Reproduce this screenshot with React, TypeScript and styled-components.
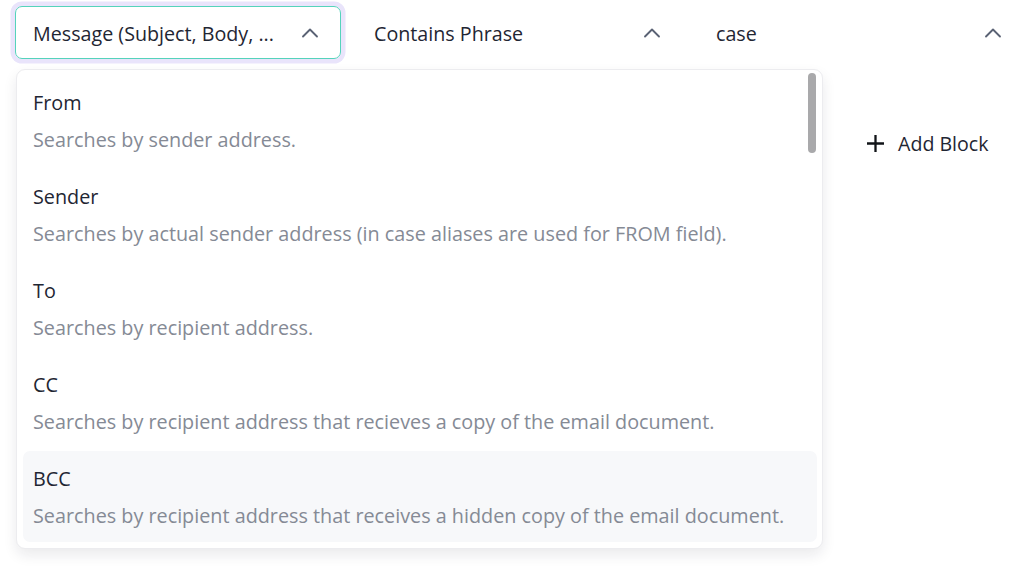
import styled, { createGlobalStyle } from "styled-components";
import { ChevronUp } from "lucide-react";

const GlobalStyle = createGlobalStyle`
  html, body {
    margin: 0;
    padding: 0;
    background: #ffffff;
    font-family: "Open Sans", "Noto Sans", sans-serif;
    color: #1f2633;
  }
  * { box-sizing: border-box; }
`;

const Page = styled.div`
  width: 1024px;
  height: 579px;
  overflow: hidden;
  padding: 6px 0 0 15px;
`;

const FieldRow = styled.div`
  display: grid;
  grid-template-columns: 326px 327px 326px;
  column-gap: 15px;
`;

const Select = styled.div<{ $open?: boolean }>`
  height: 53px;
  display: flex;
  align-items: center;
  justify-content: space-between;
  padding: 1px 16px 0 17px;
  border-radius: 7px;
  border: 1.5px solid ${({ $open }) => ($open ? "#55d3bb" : "transparent")};
  box-shadow: ${({ $open }) => ($open ? "0 0 0 4.5px #e9e4fb" : "none")};
  font-size: 19.7px;
  color: #1f2633;
  white-space: nowrap;
`;

const SelectLabel = styled.span`
  overflow: hidden;
  text-overflow: ellipsis;
`;

const Chevron = styled(ChevronUp)`
  color: #5a6274;
  flex: none;
  margin-top: -1px;
`;

const Body = styled.div`
  display: flex;
  align-items: flex-start;
  margin-top: 10px;
`;

const Menu = styled.div`
  position: relative;
  width: 807px;
  height: 480px;
  margin-left: 1px;
  border: 1px solid #ececef;
  border-radius: 9px;
  background: #ffffff;
  box-shadow: 0 6px 14px rgba(20, 24, 40, 0.09);
  overflow: hidden;
  padding: 5px 6px;
  display: flex;
  flex-direction: column;
  gap: 3px;
`;

const ScrollThumb = styled.div`
  position: absolute;
  top: 3px;
  right: 6px;
  width: 8px;
  height: 80px;
  border-radius: 4px;
  background: #a9a9ab;
`;

const Option = styled.div<{ $active?: boolean }>`
  height: 91px;
  flex: none;
  width: 794px;
  border-radius: 7px;
  padding: 15px 10px 0;
  background: ${({ $active }) => ($active ? "#f7f8fa" : "transparent")};
`;

const OptionTitle = styled.div`
  font-size: 19.8px;
  line-height: 26px;
  color: #1f2633;
`;

const OptionDesc = styled.div`
  margin-top: 11px;
  font-size: 19.8px;
  line-height: 26px;
  color: #858a95;
  white-space: nowrap;
`;

const AddBlock = styled.button`
  margin: 61px 0 0 43px;
  display: flex;
  align-items: center;
  gap: 13px;
  background: none;
  border: none;
  padding: 0;
  font-family: inherit;
  font-size: 19.6px;
  color: #1f2633;
  cursor: pointer;
`;

const options = [
  { title: "From", desc: "Searches by sender address." },
  { title: "Sender", desc: "Searches by actual sender address (in case aliases are used for FROM field)." },
  { title: "To", desc: "Searches by recipient address." },
  { title: "CC", desc: "Searches by recipient address that recieves a copy of the email document." },
  { title: "BCC", desc: "Searches by recipient address that receives a hidden copy of the email document.", active: true },
];

export default function App() {
  return (
    <>
      <GlobalStyle />
      <Page>
        <FieldRow>
          <Select $open>
            <SelectLabel>Message (Subject, Body, ...</SelectLabel>
            <Chevron size={28} strokeWidth={1.6} />
          </Select>
          <Select>
            <SelectLabel>Contains Phrase</SelectLabel>
            <Chevron size={28} strokeWidth={1.6} />
          </Select>
          <Select>
            <SelectLabel>case</SelectLabel>
            <Chevron size={28} strokeWidth={1.6} />
          </Select>
        </FieldRow>
        <Body>
          <Menu>
            {options.map((o) => (
              <Option key={o.title} $active={o.active}>
                <OptionTitle>{o.title}</OptionTitle>
                <OptionDesc>{o.desc}</OptionDesc>
              </Option>
            ))}
            <ScrollThumb />
          </Menu>
          <AddBlock>
            <svg width="19" height="19" viewBox="0 0 19 19">
              <path d="M9.5 1v17M1 9.5h17" stroke="#111418" strokeWidth="2.3" />
            </svg>
            Add Block
          </AddBlock>
        </Body>
      </Page>
    </>
  );
}
